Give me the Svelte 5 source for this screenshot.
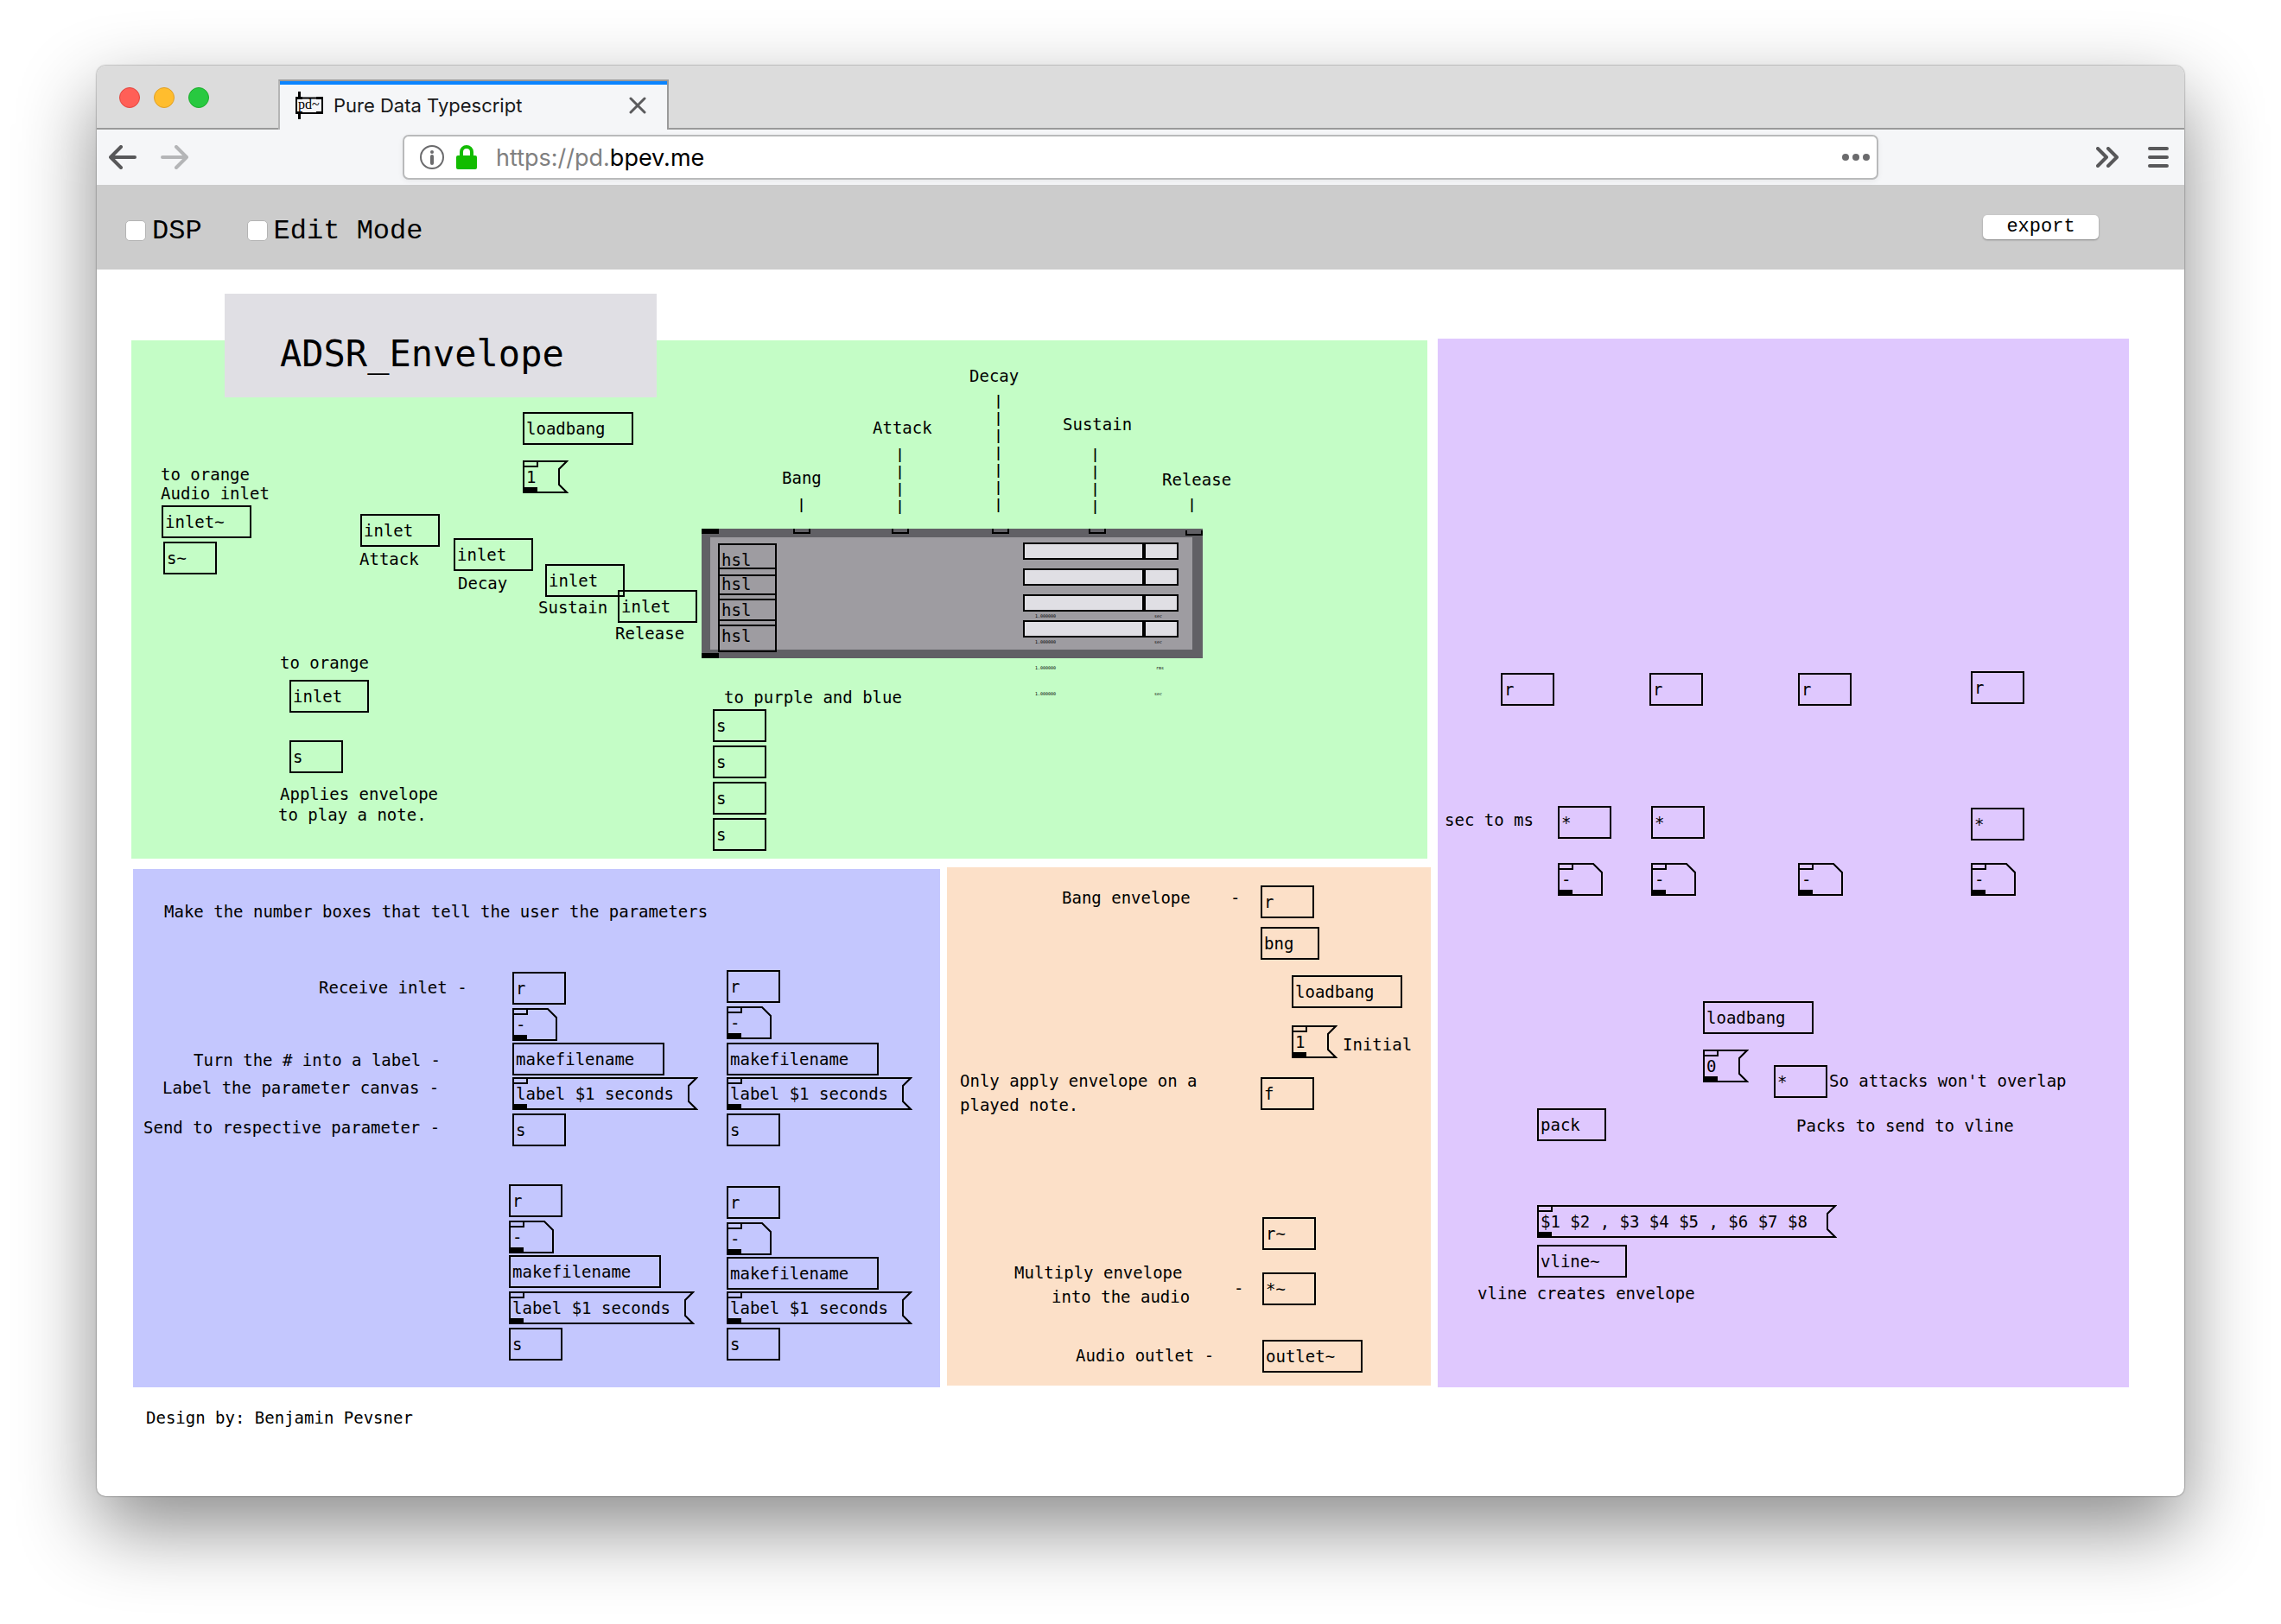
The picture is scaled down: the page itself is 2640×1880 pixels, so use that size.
<script>
  const BOX_HEIGHT = 38;

  const panels = [
    { name: 'green', x: 40, y: 82, w: 1500, h: 600 },
    { name: 'purple', x: 1552, y: 80, w: 800, h: 1214 },
    { name: 'blue', x: 42, y: 694, w: 934, h: 600 },
    { name: 'orange', x: 984, y: 692, w: 560, h: 600 },
    { name: 'title', x: 148, y: 28, w: 500, h: 120 }
  ];

  const comments = [
    [74, 226, 'to orange'],
    [74, 248, 'Audio inlet'],
    [304, 324, 'Attack'],
    [418, 352, 'Decay'],
    [511, 380, 'Sustain'],
    [600, 410, 'Release'],
    [212, 444, 'to orange'],
    [212, 596, 'Applies envelope'],
    [210, 620, 'to play a note.'],
    [726, 484, 'to purple and blue'],
    [793, 230, 'Bang'],
    [898, 172, 'Attack'],
    [1010, 112, 'Decay'],
    [1118, 168, 'Sustain'],
    [1233, 232, 'Release'],
    [78, 732, 'Make the number boxes that tell the user the parameters'],
    [257, 820, 'Receive inlet -'],
    [112, 904, 'Turn the # into a label -'],
    [76, 936, 'Label the parameter canvas -'],
    [54, 982, 'Send to respective parameter -'],
    [57, 1318, 'Design by: Benjamin Pevsner'],
    [1117, 716, 'Bang envelope'],
    [1312, 716, '-'],
    [1442, 886, 'Initial'],
    [999, 928, 'Only apply envelope on a'],
    [999, 956, 'played note.'],
    [1062, 1150, 'Multiply envelope'],
    [1105, 1178, 'into the audio'],
    [1316, 1168, '-'],
    [1133, 1246, 'Audio outlet -'],
    [1560, 626, 'sec to ms'],
    [2005, 928, "So attacks won't overlap"],
    [1967, 980, 'Packs to send to vline'],
    [1598, 1174, 'vline creates envelope']
  ];

  const leaders = [
    [811, 262, 1],
    [925, 204, 4],
    [1039, 142, 7],
    [1151, 204, 4],
    [1263, 262, 1]
  ];

  const chain = (x, ys) =>
    ['r', '-', 'makefilename', 'label $1 seconds', 's'].map((text, i) => [
      ['obj', 'num', 'obj', 'msg', 'obj'][i],
      x,
      ys[i],
      text
    ]);

  const nodes = [
    ['obj', 493, 165, 'loadbang'],
    ['msg', 493, 221, '1'],
    ['obj', 75, 273, 'inlet~'],
    ['obj', 77, 315, 's~'],
    ['obj', 305, 283, 'inlet'],
    ['obj', 413, 311, 'inlet'],
    ['obj', 519, 341, 'inlet'],
    ['obj', 603, 371, 'inlet'],
    ['obj', 223, 475, 'inlet'],
    ['obj', 223, 545, 's'],
    ['obj', 713, 509, 's'],
    ['obj', 713, 551, 's'],
    ['obj', 713, 593, 's'],
    ['obj', 713, 635, 's'],
    ...chain(481, [813, 855, 895, 935, 977]),
    ...chain(729, [811, 853, 895, 935, 977]),
    ...chain(477, [1059, 1101, 1141, 1183, 1225]),
    ...chain(729, [1061, 1103, 1143, 1183, 1225]),
    ['obj', 1347, 713, 'r'],
    ['obj', 1347, 761, 'bng'],
    ['obj', 1383, 817, 'loadbang'],
    ['msg', 1383, 875, '1'],
    ['obj', 1347, 935, 'f'],
    ['obj', 1349, 1097, 'r~'],
    ['obj', 1349, 1161, '*~'],
    ['obj', 1349, 1239, 'outlet~'],
    ['obj', 1625, 467, 'r'],
    ['obj', 1797, 467, 'r'],
    ['obj', 1969, 467, 'r'],
    ['obj', 2169, 465, 'r'],
    ['obj', 1691, 621, '*'],
    ['obj', 1799, 621, '*'],
    ['obj', 2169, 623, '*'],
    ['num', 1691, 687, '-'],
    ['num', 1799, 687, '-'],
    ['num', 1969, 687, '-'],
    ['num', 2169, 687, '-'],
    ['obj', 1859, 847, 'loadbang'],
    ['msg', 1859, 903, '0'],
    ['obj', 1941, 921, '*'],
    ['obj', 1667, 971, 'pack'],
    ['msg', 1667, 1083, '$1 $2 , $3 $4 $5 , $6 $7 $8'],
    ['obj', 1667, 1129, 'vline~']
  ].map(([kind, x, y, text]) => ({ kind, x, y, text, w: widthOf(kind, text) }));

  const sliders = [
    { name: 'Attack', boxY: 17, y: 16, unit: 'sec', unitX: 524 },
    { name: 'Decay', boxY: 45, y: 46, unit: 'sec', unitX: 524 },
    { name: 'Sustain', boxY: 75, y: 76, unit: 'rms', unitX: 526 },
    { name: 'Release', boxY: 105, y: 106, unit: 'sec', unitX: 524 }
  ];

  const ports = [[106, 0], [220, 0], [336, 0], [448, 0], [560, 2]];

  function widthOf(kind, text) {
    if (kind === 'num') return 52;
    if (kind === 'msg') return Math.max(53, text.length * 12 + 23);
    return Math.max(62, text.length * 12 + 32);
  }

  function outline(kind, w) {
    const r = w - 1;
    const b = BOX_HEIGHT - 1;
    return kind === 'msg'
      ? `M1 1H${r - 1}L${w - 11} 10V28L${r - 1} ${b}H1Z`
      : `M1 1H${w - 11}L${r} 11V${b}H1Z`;
  }
</script>

<div class="desktop">
  <div class="window">
    <header class="titlebar">
      <div class="lights">
        <button class="light close" aria-label="Close window"></button>
        <button class="light minimise" aria-label="Minimise window"></button>
        <button class="light zoom" aria-label="Zoom window"></button>
      </div>
      <div class="tab">
        <svg class="favicon" viewBox="0 0 32 32" width="32" height="32" aria-hidden="true">
          <path d="M1 7.500H31V25H1Z" fill="#f5f6f8" stroke="#000" stroke-width="2" />
          <path d="M3 0h3v7H3zM3 25h3v7H3zM0 6h8v3H0zM24 6h8v3h-8zM0 23h8v3H0zM24 23h8v3h-8z" />
          <text x="3" y="20" font-family="Liberation Serif, serif" font-size="16">pd~</text>
        </svg>
        <span class="tab-title">Pure Data Typescript</span>
        <button class="icon" aria-label="Close tab">
          <svg viewBox="0 0 20 20" width="20" height="20"><path d="M2 2L18 18M18 2L2 18" fill="none" stroke="#5b5b5d" stroke-width="3" stroke-linecap="round" /></svg>
        </button>
      </div>
      <div class="strip"></div>
    </header>

    <nav class="navbar">
      <div class="history">
        <button class="icon" aria-label="Back">
          <svg viewBox="0 0 32 28" width="32" height="28"><path d="M14 2L2 14L14 26M2 14H30" fill="none" stroke="#58585a" stroke-width="4" stroke-linecap="round" stroke-linejoin="round" /></svg>
        </button>
        <button class="icon" aria-label="Forward">
          <svg viewBox="0 0 32 28" width="32" height="28"><path d="M18 2L30 14L18 26M30 14H2" fill="none" stroke="#b4b5b7" stroke-width="4" stroke-linecap="round" stroke-linejoin="round" /></svg>
        </button>
      </div>
      <div class="address">
        <svg viewBox="0 0 28 28" width="28" height="28" aria-hidden="true">
          <circle cx="14" cy="14" r="13" fill="none" stroke="#6b6b6d" stroke-width="2" />
          <circle cx="14" cy="8" r="2" fill="#6b6b6d" />
          <path d="M14 13V21" stroke="#6b6b6d" stroke-width="4" stroke-linecap="round" />
        </svg>
        <svg class="lock" viewBox="0 0 24 28" width="24" height="28" aria-hidden="true">
          <rect y="12" width="24" height="16" rx="2" fill="#12bc00" />
          <path d="M6 14V8a6 6 0 0 1 12 0v6" fill="none" stroke="#12bc00" stroke-width="4" />
        </svg>
        <a class="url" href="https://pd.bpev.me">https://pd.<b>bpev.me</b></a>
        <button class="icon" aria-label="Page actions">
          <svg viewBox="0 0 32 8" width="32" height="8"><g fill="#6b6b6d"><circle cx="4" cy="4" r="4" /><circle cx="16" cy="4" r="4" /><circle cx="28" cy="4" r="4" /></g></svg>
        </button>
      </div>
      <div class="extras">
        <button class="icon" aria-label="More tools">
          <svg viewBox="0 0 26 24" width="26" height="24"><path d="M2 2L12 12L2 22M14 2L24 12L14 22" fill="none" stroke="#58585a" stroke-width="4" stroke-linecap="round" stroke-linejoin="round" /></svg>
        </button>
        <button class="icon" aria-label="Menu">
          <svg viewBox="0 0 24 24" width="24" height="24"><path d="M2 2H22M2 12H22M2 22H22" stroke="#58585a" stroke-width="4" stroke-linecap="round" /></svg>
        </button>
      </div>
    </nav>

    <div class="toolbar">
      <label><input type="checkbox" /><span>DSP</span></label>
      <label><input type="checkbox" /><span>Edit Mode</span></label>
      <button class="export">export</button>
    </div>

    <main class="patch">
      {#each panels as p}
        <div class="panel {p.name}" style="left:{p.x}px;top:{p.y}px;width:{p.w}px;height:{p.h}px"></div>
      {/each}
      <h1>ADSR_Envelope</h1>

      {#each comments as [x, y, text]}
        <span class="comment" style="left:{x}px;top:{y}px">{text}</span>
      {/each}

      {#each leaders as [x, y, count]}
        <span class="leader" style="left:{x}px;top:{y}px">{Array(count).fill('|').join('\n')}</span>
      {/each}

      {#each nodes as n}
        <div class="node {n.kind}" style="left:{n.x}px;top:{n.y}px;width:{n.w}px">
          {#if n.kind !== 'obj'}
            <svg viewBox="0 0 {n.w} {BOX_HEIGHT}" width={n.w} height={BOX_HEIGHT} aria-hidden="true">
              <path d={outline(n.kind, n.w)} fill="none" stroke="#000" stroke-width="2" />
              <path d="M1 1H17V7H1Z" fill="none" stroke="#000" stroke-width="2" />
              <path d="M0 31H17V38H0Z" />
            </svg>
          {/if}
          <span>{n.text}</span>
        </div>
      {/each}

      <section class="module">
        <div class="cap top"></div>
        <div class="cap bottom"></div>
        {#each ports as [x, y]}
          <div class="port" style="left:{x}px;top:{y}px"></div>
        {/each}
        {#each sliders as s}
          <div class="node obj hsl" style="top:{s.boxY}px"><span>hsl</span></div>
          <input type="range" min="0" max="172" value="136" aria-label={s.name} style="top:{s.y}px" />
          <span class="tiny value" style="top:{s.y + 82}px">1.000000</span>
          <span class="tiny" style="left:{s.unitX}px;top:{s.y + 82}px">{s.unit}</span>
        {/each}
      </section>
    </main>
  </div>
</div>

<style>
  :global(body) {
    margin: 0;
    background: #fff;
  }
  .desktop {
    box-sizing: border-box;
    min-height: 100vh;
    padding: 76px 112px 148px;
    overflow: hidden;
  }
  .window {
    border-radius: 10px;
    background: #fff;
    box-shadow: 0 0 2px rgba(0, 0, 0, 0.6), 0 36px 90px rgba(0, 0, 0, 0.46);
  }
  button {
    padding: 0;
    border: 0;
    background: none;
    color: inherit;
  }
  .icon {
    display: flex;
  }
  .titlebar {
    display: flex;
    height: 74px;
    border-radius: 10px 10px 0 0;
    background: #dcdcdc;
  }
  .lights {
    display: flex;
    gap: 16px;
    box-sizing: border-box;
    width: 210px;
    padding: 25px 26px 0;
    border-bottom: 2px solid #999;
  }
  .light {
    box-sizing: border-box;
    width: 24px;
    height: 24px;
    border-radius: 50%;
  }
  .close {
    border: 1px solid #e2463f;
    background: #ff5f57;
  }
  .minimise {
    border: 1px solid #e0a028;
    background: #ffbd2e;
  }
  .zoom {
    border: 1px solid #1dad2c;
    background: #28c940;
  }
  .tab {
    display: flex;
    align-items: center;
    box-sizing: border-box;
    width: 452px;
    margin-top: 16px;
    padding: 0 24px 0 18px;
    border: 2px solid #9a9a9a;
    border-left-color: #b4b4b4;
    border-bottom: 0;
    background: linear-gradient(#0a84ff 4px, #f5f6f8 4px);
    font: 22px/28px Inter, sans-serif;
    color: #18191a;
  }
  .favicon {
    margin-right: 12px;
  }
  .tab-title {
    flex: 1;
  }
  .strip {
    flex: 1;
    border-bottom: 2px solid #999;
  }
  .navbar {
    display: flex;
    align-items: center;
    height: 64px;
    background: #f5f6f8;
  }
  .history {
    display: flex;
    gap: 28px;
    box-sizing: border-box;
    width: 354px;
    padding-left: 14px;
  }
  .address {
    display: flex;
    flex: 1;
    align-items: center;
    box-sizing: border-box;
    height: 52px;
    padding: 0 8px 0 18px;
    border: 2px solid #b9babb;
    border-radius: 7px;
    background: #fff;
    box-shadow: 0 2px 6px rgba(0, 0, 0, 0.06);
  }
  .lock {
    margin-left: 14px;
  }
  .url {
    flex: 1;
    margin-left: 22px;
    padding-top: 2px;
    font: 27px/32px Inter, sans-serif;
    color: #808080;
    text-decoration: none;
  }
  .url b {
    font-weight: 400;
    color: #000;
  }
  .extras {
    display: flex;
    justify-content: flex-end;
    gap: 34px;
    box-sizing: border-box;
    width: 354px;
    padding-right: 18px;
  }
  .toolbar {
    display: flex;
    align-items: center;
    height: 98px;
    padding: 0 99px 0 33px;
    background: #ccc;
    font: 32px/36px 'Courier New', 'Liberation Mono', monospace;
  }
  .toolbar label {
    display: flex;
    align-items: center;
    gap: 7px;
    margin: 8px 52px 0 0;
  }
  .toolbar label span {
    padding-top: 2px;
  }
  .toolbar input {
    appearance: none;
    width: 24px;
    height: 24px;
    margin: 0;
    border: 1px solid #b4b4b4;
    border-radius: 5px;
    background: #fff;
  }
  .export {
    width: 134px;
    height: 28px;
    margin: 0 0 0 auto;
    border-radius: 5px;
    background: #fff;
    box-shadow: 0 1px 2px rgba(0, 0, 0, 0.35);
    font: 22px/26px 'Courier New', 'Liberation Mono', monospace;
  }
  .patch {
    position: relative;
    min-height: 1420px;
    font: 19px/22px 'DejaVu Sans Mono', monospace;
    color: #000;
    white-space: pre;
  }
  .panel,
  .comment,
  .leader,
  .node,
  .module,
  .cap,
  .port,
  .tiny,
  h1,
  .module input {
    position: absolute;
  }
  .green {
    background: #c4fdc6;
  }
  .purple {
    background: #dfc8fe;
  }
  .blue {
    background: #c4c7fe;
  }
  .orange {
    background: #fce0c8;
  }
  .title {
    background: #e0dfe4;
  }
  h1 {
    left: 212px;
    top: 73px;
    margin: 0;
    font: 42px/50px 'DejaVu Sans Mono', monospace;
  }
  .leader {
    font-size: 15px;
    font-weight: 700;
    line-height: 20px;
  }
  .node {
    display: flex;
    align-items: center;
    box-sizing: border-box;
    height: 38px;
    padding-left: 4px;
  }
  .node svg {
    position: absolute;
    left: 0;
    top: 0;
  }
  .obj {
    padding-left: 2px;
    border: 2px solid #000;
  }
  .module {
    left: 700px;
    top: 300px;
    box-sizing: border-box;
    width: 580px;
    height: 150px;
    background: linear-gradient(#9e9ca1, #9e9ca1) 10px 10px / 558px 130px no-repeat #616065;
  }
  .cap {
    left: 0;
    width: 20px;
    height: 6px;
    background: #000;
  }
  .cap.top {
    top: 0;
  }
  .cap.bottom {
    bottom: 0;
  }
  .port {
    box-sizing: border-box;
    width: 20px;
    height: 6px;
    border: 2px solid #000;
    border-top: 0;
  }
  .hsl {
    left: 19px;
    width: 68px;
  }
  .module input {
    appearance: none;
    left: 372px;
    box-sizing: border-box;
    width: 180px;
    height: 20px;
    margin: 0;
    border: 2px solid #000;
    background: #e0dfe4;
  }
  .module input::-webkit-slider-thumb {
    appearance: none;
    width: 4px;
    height: 16px;
    background: #000;
  }
  .tiny {
    font-size: 5px;
    line-height: 6px;
  }
  .value {
    left: 386px;
  }
</style>
